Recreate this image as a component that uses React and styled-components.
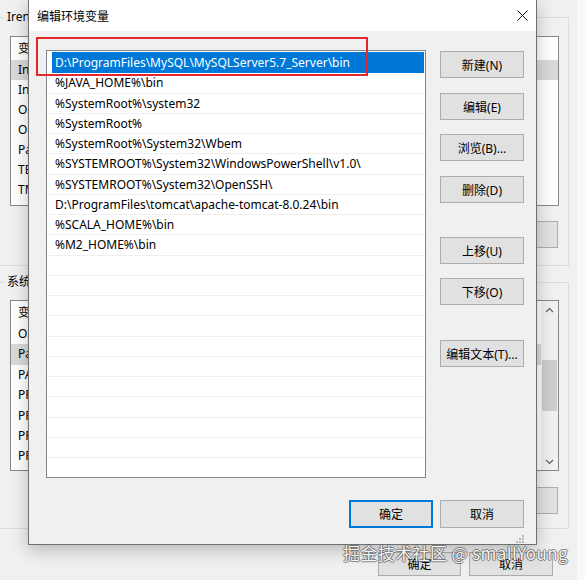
import React from 'react';
import styled, { createGlobalStyle } from 'styled-components';

const GlobalStyle = createGlobalStyle`
  html, body {
    margin: 0;
    padding: 0;
  }
  body {
    width: 585px;
    height: 580px;
    overflow: hidden;
    font-family: "Noto Sans", "Noto Sans CJK SC", sans-serif;
    font-size: 12px;
    color: #000;
  }
`;

const Screen = styled.div`
  position: relative;
  display: flex;
  width: 585px;
  height: 580px;
  overflow: hidden;
  background: #f9f9f9;
`;

/* the environment variables window behind the dialog */
const BackWindow = styled.div`
  flex: none;
  width: 577px;
  box-sizing: border-box;
  padding: 17px 8px 0 0;
  display: flex;
  flex-direction: column;
  background: #f0f0f0;
`;

const GroupBox = styled.div`
  display: flex;
  flex-direction: column;
  margin-top: ${(p) => p.$top || 0}px;
  padding: 0 9px ${(p) => p.$bottom}px 10px;
  border: 1px solid #dcdcdc;
  border-left: none;
`;

const Legend = styled.div`
  align-self: flex-start;
  height: 16px;
  margin: -9px 0 0 -6px;
  padding: 0 3px;
  line-height: 16px;
  background: #f0f0f0;
  white-space: nowrap;
`;

const BgList = styled.div`
  display: flex;
  height: ${(p) => p.$height}px;
  margin-top: ${(p) => p.$top}px;
  box-sizing: border-box;
  border: 1px solid #828790;
  background: #fff;
  overflow: hidden;
`;

const BgRows = styled.div`
  flex: 1;
  display: flex;
  flex-direction: column;
`;

const BgRow = styled.div`
  flex: none;
  height: ${(p) => p.$height}px;
  line-height: ${(p) => p.$height}px;
  padding-left: 7px;
  background: ${(p) => (p.$selected ? '#d9d9d9' : 'transparent')};
  white-space: nowrap;
`;

const ScrollBar = styled.div`
  flex: none;
  width: 17px;
  display: flex;
  flex-direction: column;
  background: #f0f0f0;
`;

const ScrollArrow = styled.div`
  height: 17px;
  display: flex;
  align-items: center;
  justify-content: center;
`;

const ScrollTrack = styled.div`
  flex: 1;
  display: flex;
  flex-direction: column;
  align-items: center;
`;

const ScrollThumb = styled.div`
  width: 15px;
  height: ${(p) => p.$size}px;
  margin-top: ${(p) => p.$offset}px;
  background: #cdcdcd;
`;

const BgButtonRow = styled.div`
  display: flex;
  justify-content: flex-end;
  gap: 8px;
  margin-top: ${(p) => p.$top}px;
  padding-right: ${(p) => p.$right}px;
`;

const BgButton = styled.div`
  width: ${(p) => p.$width || 84}px;
  height: ${(p) => p.$height || 27}px;
  box-sizing: border-box;
  display: flex;
  align-items: center;
  justify-content: center;
  border: 1px solid #adadad;
  background: #e1e1e1;
`;

/* the edit dialog */
const Dialog = styled.div`
  position: absolute;
  left: 28px;
  top: -1px;
  width: 509px;
  height: 546px;
  box-sizing: border-box;
  display: flex;
  flex-direction: column;
  border: 1px solid #707070;
  background: #f0f0f0;
  box-shadow: 0 5px 16px rgba(0, 0, 0, 0.24);
`;

const TitleBar = styled.div`
  flex: none;
  height: 31px;
  display: flex;
  align-items: center;
  justify-content: space-between;
  padding: 0 8px 0 8px;
  background: #fff;
`;

const Title = styled.span`
  font-size: 12px;
  color: #000;
`;

const Body = styled.div`
  flex: 1;
  display: flex;
  flex-direction: column;
  padding: 19px 12px 0 17px;
`;

const MainRow = styled.div`
  display: flex;
  align-items: flex-start;
  gap: 14px;
`;

const ListBox = styled.div`
  width: 380px;
  height: 428px;
  box-sizing: border-box;
  display: flex;
  flex-direction: column;
  border: 1px solid #828790;
  background: #fff;
  overflow: hidden;
`;

const EditRow = styled.div`
  flex: none;
  height: 22.3px;
  box-sizing: border-box;
  padding: 1px 1px 0 5px;
`;

const EditField = styled.div`
  height: 21px;
  line-height: 21px;
  padding-left: 3px;
  background: #0078d7;
  color: #fff;
  white-space: nowrap;
`;

const PathRow = styled.div`
  flex: none;
  height: 20.26px;
  line-height: 19px;
  box-sizing: border-box;
  padding-left: 8px;
  border-bottom: 1px solid #efefef;
  white-space: nowrap;
`;

const ButtonColumn = styled.div`
  width: 84px;
  display: flex;
  flex-direction: column;
`;

const Button = styled.div`
  width: 84px;
  height: ${(p) => p.$height || 27}px;
  margin-top: ${(p) => p.$gap || 0}px;
  box-sizing: border-box;
  display: flex;
  align-items: center;
  justify-content: center;
  border: ${(p) => (p.$primary ? '2px solid #0078d7' : '1px solid #adadad')};
  background: #e1e1e1;
  font-size: 12px;
`;

const BottomRow = styled.div`
  display: flex;
  justify-content: flex-end;
  gap: 7px;
  margin-top: 22px;
`;

const GripRow = styled.div`
  display: flex;
  justify-content: flex-end;
  margin-top: auto;
  padding-bottom: 1px;
`;

const Highlight = styled.div`
  position: absolute;
  left: 7px;
  top: 37px;
  width: 332px;
  height: 39px;
  box-sizing: border-box;
  border: 2px solid #e3262b;
`;

const Watermark = styled.div`
  position: absolute;
  right: 17px;
  top: 542px;
  font-family: "Noto Sans CJK SC", "Noto Sans", sans-serif;
  font-size: 17px;
  line-height: 22px;
  letter-spacing: 0.4px;
  color: rgba(255, 255, 255, 0.94);
  text-shadow: 1px 0 rgba(70, 70, 70, 0.6), -1px 0 rgba(70, 70, 70, 0.6),
    0 1px rgba(70, 70, 70, 0.6), 0 -1px rgba(70, 70, 70, 0.6);
  white-space: nowrap;
`;

const userVars = [
  'IntelliJ IDEA',
  'IntelliJ IDEA Community Edition',
  'OneDrive',
  'OneDriveConsumer',
  'Path',
  'TEMP',
  'TMP',
];

const systemVars = [
  'OS',
  'Path',
  'PATHEXT',
  'PROCESSOR_ARCHITECTURE',
  'PROCESSOR_IDENTIFIER',
  'PROCESSOR_LEVEL',
  'PROCESSOR_REVISION',
];

const paths = [
  '%JAVA_HOME%\\bin',
  '%SystemRoot%\\system32',
  '%SystemRoot%',
  '%SystemRoot%\\System32\\Wbem',
  '%SYSTEMROOT%\\System32\\WindowsPowerShell\\v1.0\\',
  '%SYSTEMROOT%\\System32\\OpenSSH\\',
  'D:\\ProgramFiles\\tomcat\\apache-tomcat-8.0.24\\bin',
  '%SCALA_HOME%\\bin',
  '%M2_HOME%\\bin',
];

const pathRows = [...paths, ...Array(11).fill('')];

const Chevron = ({ up }) => (
  <svg width="9" height="6" viewBox="0 0 9 6">
    <polyline
      points={up ? '1,5 4.5,1.5 8,5' : '1,1 4.5,4.5 8,1'}
      fill="none"
      stroke="#606060"
      strokeWidth="1.2"
    />
  </svg>
);

const CloseIcon = () => (
  <svg width="11" height="11" viewBox="0 0 11 11">
    <path d="M0.5 0.5 L10.5 10.5 M10.5 0.5 L0.5 10.5" stroke="#111" strokeWidth="1" />
  </svg>
);

const Grip = () => (
  <svg width="8" height="8" viewBox="0 0 8 8" fill="#b4b4b4">
    <rect x="6" y="0" width="2" height="2" />
    <rect x="3" y="3" width="2" height="2" />
    <rect x="6" y="3" width="2" height="2" />
    <rect x="0" y="6" width="2" height="2" />
    <rect x="3" y="6" width="2" height="2" />
    <rect x="6" y="6" width="2" height="2" />
  </svg>
);

export default function App() {
  return (
    <Screen>
      <GlobalStyle />
      <BackWindow>
        <GroupBox $bottom={17}>
          <Legend>Irene 的用户变量(U)</Legend>
          <BgList $top={11} $height={170}>
            <BgRows>
              <BgRow $height={23}>变量</BgRow>
              {userVars.map((name, i) => (
                <BgRow key={name} $height={20} $selected={i === 0}>
                  {name}
                </BgRow>
              ))}
            </BgRows>
          </BgList>
          <BgButtonRow $top={15} $right={1}>
            <BgButton>删除(D)</BgButton>
          </BgButtonRow>
        </GroupBox>

        <GroupBox $top={16} $bottom={14}>
          <Legend>系统变量(S)</Legend>
          <BgList $top={10} $height={171}>
            <BgRows>
              <BgRow $height={23}>变量</BgRow>
              {systemVars.map((name, i) => (
                <BgRow key={name} $height={20.4} $selected={i === 1}>
                  {name}
                </BgRow>
              ))}
            </BgRows>
            <ScrollBar>
              <ScrollArrow>
                <Chevron up />
              </ScrollArrow>
              <ScrollTrack>
                <ScrollThumb $offset={42} $size={51} />
              </ScrollTrack>
              <ScrollArrow>
                <Chevron />
              </ScrollArrow>
            </ScrollBar>
          </BgList>
          <BgButtonRow $top={16} $right={1}>
            <BgButton>删除(L)</BgButton>
          </BgButtonRow>
        </GroupBox>

        <BgButtonRow $top={23} $right={16}>
          <BgButton $width={83} $height={24}>确定</BgButton>
          <BgButton $height={24}>取消</BgButton>
        </BgButtonRow>
      </BackWindow>

      <Dialog>
        <TitleBar>
          <Title>编辑环境变量</Title>
          <CloseIcon />
        </TitleBar>
        <Body>
          <MainRow>
            <ListBox>
              <EditRow>
                <EditField>D:\ProgramFiles\MySQL\MySQLServer5.7_Server\bin</EditField>
              </EditRow>
              {pathRows.map((p, i) => (
                <PathRow key={i}>{p}</PathRow>
              ))}
            </ListBox>
            <ButtonColumn>
              <Button $gap={1}>新建(N)</Button>
              <Button $gap={15}>编辑(E)</Button>
              <Button $gap={14}>浏览(B)...</Button>
              <Button $gap={15}>删除(D)</Button>
              <Button $gap={34}>上移(U)</Button>
              <Button $gap={14}>下移(O)</Button>
              <Button $gap={35}>编辑文本(T)...</Button>
            </ButtonColumn>
          </MainRow>
          <BottomRow>
            <Button $primary $height={28}>确定</Button>
            <Button $height={28}>取消</Button>
          </BottomRow>
          <GripRow>
            <Grip />
          </GripRow>
        </Body>
        <Highlight />
      </Dialog>

      <Watermark>掘金技术社区 @ smallYoung</Watermark>
    </Screen>
  );
}
